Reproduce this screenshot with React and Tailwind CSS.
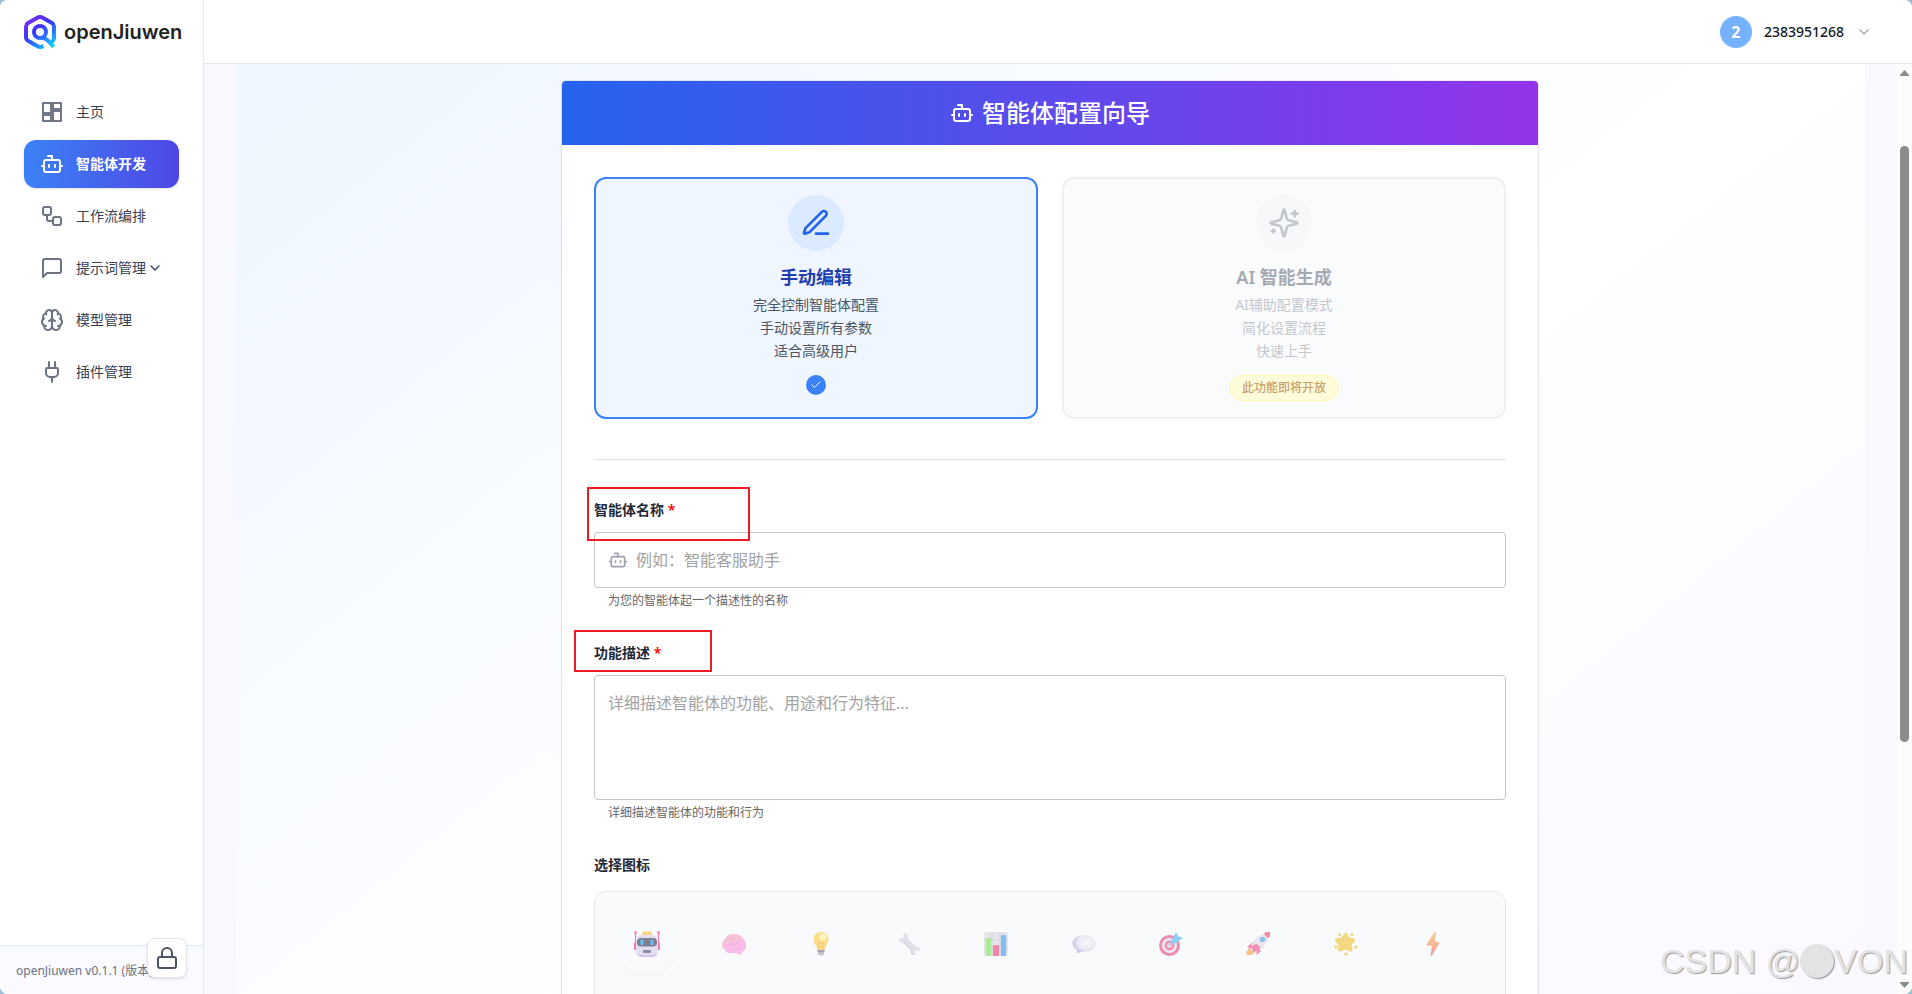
import { useState } from "react";
import { Bot, Brain, Check, ChevronDown, Lock, Plug, Workflow } from "lucide-react";

const DashboardIcon = ({ className }) => (
  <svg className={className} viewBox="0 0 24 24" fill="none" stroke="currentColor" strokeWidth="1.9">
    <rect x="3" y="3" width="8" height="10" />
    <rect x="13" y="3" width="8" height="6" />
    <rect x="13" y="11" width="8" height="10" />
    <rect x="3" y="15" width="8" height="6" />
  </svg>
);

const MessageIcon = ({ className }) => (
  <svg className={className} viewBox="0 0 24 24" fill="none" stroke="currentColor" strokeWidth="2" strokeLinecap="round" strokeLinejoin="round">
    <path d="M21 15a2 2 0 0 1-2 2H7l-4 4V5a2 2 0 0 1 2-2h14a2 2 0 0 1 2 2z" />
  </svg>
);

const PenIcon = ({ className }) => (
  <svg className={className} viewBox="0 0 24 24" fill="none" stroke="currentColor" strokeWidth="2" strokeLinecap="round" strokeLinejoin="round">
    <path d="M12 20h9" />
    <path d="M16.376 3.622a1 1 0 0 1 3.002 3.002L7.368 18.635a2 2 0 0 1-.855.506l-2.872.838a.5.5 0 0 1-.62-.62l.838-2.872a2 2 0 0 1 .506-.854z" />
  </svg>
);

const SparklesIcon = ({ className }) => (
  <svg className={className} viewBox="0 0 24 24" fill="none" stroke="currentColor" strokeWidth="2" strokeLinecap="round" strokeLinejoin="round">
    <path d="M9.937 15.5A2 2 0 0 0 8.5 14.063l-6.135-1.582a.5.5 0 0 1 0-.962L8.5 9.936A2 2 0 0 0 9.937 8.5l1.582-6.135a.5.5 0 0 1 .963 0L14.063 8.5A2 2 0 0 0 15.5 9.937l6.135 1.581a.5.5 0 0 1 0 .964L15.5 14.063a2 2 0 0 0-1.437 1.437l-1.582 6.135a.5.5 0 0 1-.963 0z" />
    <path d="M20 3v4" />
    <path d="M22 5h-4" />
    <path d="M4 17v2" />
    <path d="M5 18H3" />
  </svg>
);

const Logo = () => (
  <svg className="h-[34px] w-8 shrink-0" viewBox="0 0 32 34" fill="none">
    <defs>
      <linearGradient id="logo-ring" x1="6" y1="2" x2="28" y2="32" gradientUnits="userSpaceOnUse">
        <stop offset="0" stopColor="#7a2cf8" />
        <stop offset="0.4" stopColor="#3b35fb" />
        <stop offset="0.75" stopColor="#1f8dff" />
        <stop offset="1" stopColor="#10dcff" />
      </linearGradient>
    </defs>
    <g stroke="url(#logo-ring)" strokeWidth="4" strokeLinejoin="round">
      <path d="M19.5 31.2 Q16 32.6 13.5 31.2 L4 25.8 Q2 24.6 2 22.4 V11.4 Q2 9.2 4 8 L13.8 2.6 Q16 1.4 18.2 2.6 L28 8 Q30 9.2 30 11.4 V24 L27 28.5" />
      <circle cx="16" cy="17" r="6" />
      <path d="M18 22.5 Q24 24 29.5 32" />
    </g>
  </svg>
);

const RobotEmoji = () => (
  <svg className="size-[26px] opacity-75" viewBox="0 0 26 26">
    <path d="M1.5 2v17M24.5 2v17" stroke="#f0568a" strokeWidth="1.2" />
    <circle cx="1.5" cy="1.6" r="1.4" fill="#f0568a" />
    <circle cx="24.5" cy="1.6" r="1.4" fill="#f0568a" />
    <rect x="0" y="11" width="3" height="8" rx="1.5" fill="#f0568a" />
    <rect x="23" y="11" width="3" height="8" rx="1.5" fill="#f0568a" />
    <rect x="8" y="0.5" width="10" height="6" rx="2" fill="#f7c55c" />
    <path d="M2 10q0-6 6-6h10q6 0 6 6v11q0 5-5 5H7q-5 0-5-5z" fill="#ddd6ec" />
    <rect x="3" y="7" width="20" height="8.5" rx="4" fill="#56556c" />
    <rect x="6.5" y="8.5" width="3" height="5.5" rx="1" fill="#35b1f3" />
    <rect x="16.5" y="8.5" width="3" height="5.5" rx="1" fill="#35b1f3" />
    <rect x="9" y="19" width="8" height="3" rx="1" fill="#6d6680" />
    <path d="M4 23q9 3 18 0-1 3-4 3H8q-3 0-4-3z" fill="#c3abe8" />
  </svg>
);

const BrainEmoji = () => (
  <svg className="size-6 opacity-50" viewBox="0 0 24 24">
    <path d="M0 13Q0 9 3 7q2-5 9-5 6 0 9 4 4 5 3 9-1 4-4 5l-1 3-4-2H8q-5 0-5-4-3 0-3-4z" fill="#f58bb6" />
    <path d="M3 16q1-5 6-5 4-1 6-4 7 1 8 7-1 5-4 6l-1 3-4-2H8q-5 0-5-5z" fill="#fb7fe0" />
    <path d="M3 9q4-4 8-3M5 15q3-4 8-3 4 0 5-4M12 18q4 0 5-3" stroke="#e4609f" strokeWidth="0.8" fill="none" />
  </svg>
);

const BulbEmoji = () => (
  <svg className="size-6 opacity-60" viewBox="0 0 24 24">
    <path d="M12 0c5 0 7.5 3.5 7.5 7.5S16 14 15.5 18h-7C8 14 4.5 12 4.5 7.5S7 0 12 0z" fill="#fdc93b" />
    <circle cx="14" cy="5" r="3.5" fill="#fff0a0" />
    <path d="M10.5 18l-1-7q2 1 5 0l-1 7" stroke="#ee9c2f" fill="none" />
    <path d="M8.5 18h7v2h-7z" fill="#76657d" />
    <path d="M9 20h6v2.5l-2 1h-2l-2-1z" fill="#a89ab0" />
  </svg>
);

const WrenchEmoji = () => (
  <svg className="size-6 opacity-50" viewBox="0 0 24 24">
    <path d="M2 6l3 1 2-2-1-3q5-2 5 5l8 8q5-1 4 4l-3-1-2 2 1 3q-5 1-5-5L6 10q-4 1-4-4z" fill="#cfc7dc" />
    <path d="M6 10l8 8q0 4 2 5" stroke="#a094b8" strokeWidth="1" fill="none" />
  </svg>
);

const ChartEmoji = () => (
  <svg className="size-6 opacity-60" viewBox="0 0 24 24">
    <rect width="24" height="24" rx="2" fill="#d9d6df" />
    <path d="M0 8h24M0 16h24M8 0v24M16 0v24" stroke="#b6b1c0" strokeWidth="0.8" />
    <rect x="2" y="6" width="5" height="18" rx="1" fill="#7be05a" />
    <rect x="9" y="13" width="6" height="11" rx="1" fill="#ec3b71" />
    <rect x="17" y="3" width="5" height="21" rx="1" fill="#2f97ec" />
  </svg>
);

const BubbleEmoji = () => (
  <svg className="size-6 opacity-60" viewBox="0 0 24 24">
    <defs>
      <radialGradient id="bubble-fill" cx="0.6" cy="0.4" r="0.6">
        <stop offset="0" stopColor="#fbf9fd" />
        <stop offset="0.6" stopColor="#e6dff0" />
        <stop offset="1" stopColor="#b3a1d2" />
      </radialGradient>
    </defs>
    <path d="M12 3c7 0 11.5 4 11.5 8.5S19 19.5 12 19.5l-3 .5-4 1.5V18C2 16.5.5 14 .5 11.5.5 7 5 3 12 3z" fill="url(#bubble-fill)" />
  </svg>
);

const TargetEmoji = () => (
  <svg className="size-6 opacity-60" viewBox="0 0 24 24">
    <circle cx="10.5" cy="13.5" r="10.5" fill="#e9477b" />
    <circle cx="10.5" cy="13.5" r="7.5" fill="#e8dff2" />
    <circle cx="10.5" cy="13.5" r="5" fill="#e9477b" />
    <circle cx="10.5" cy="13.5" r="2.5" fill="#d4c4de" />
    <path d="M10.5 13.5l5-5" stroke="#8b6da0" strokeWidth="1" />
    <path d="M11 10l3-4 3-6 2 4 5 2-6 4-4 3z" fill="#45b2ee" />
  </svg>
);

const RocketEmoji = () => (
  <svg className="size-6 opacity-60" viewBox="0 0 24 24">
    <path d="M1 23q-2-4 3-7l5 4q-3 4-8 3z" fill="#fb9b3c" />
    <path d="M7 10l-6 5 5 1zM13 17l-2 6 4-4z" fill="#ef3f72" />
    <path d="M4 17Q7 5 19 1l4 4q-3 11-14 16z" fill="#e2dae9" />
    <path d="M18 1q3-1.5 6-1 .5 3-1 6-4-1-5-5z" fill="#ef4163" />
    <circle cx="16.5" cy="7.5" r="2.7" fill="#4a97e0" />
    <path d="M11 12q-6 1-9 5l4-1 1 4 4-1-1 4q4-4 4-8z" fill="#f14a85" />
  </svg>
);

const StarEmoji = () => (
  <svg className="size-6 opacity-60" viewBox="0 0 24 24">
    <path d="M11.5 1q1 0 1.5 1.5L15 6l4 .5q3 .5 1 3L17 13l1 4q.5 3-2 2l-4.500-2L7 19q-3 1-2.500-2L5 13 2 9.500q-2-2 1-3L8 6l2-3.500Q10.500 1 11.500 1z" fill="#edc330" stroke="#edc330" strokeLinejoin="round" />
    <g fill="#f0bf34">
      <circle cx="5.5" cy="2.5" r="1.5" />
      <circle cx="18" cy="2.5" r="1.5" />
      <circle cx="2" cy="15" r="1.7" />
      <circle cx="22" cy="15" r="1.7" />
      <circle cx="12" cy="22" r="1.8" />
    </g>
  </svg>
);

const BoltEmoji = () => (
  <svg className="size-6 opacity-60" viewBox="0 0 24 24">
    <defs>
      <linearGradient id="bolt-fill" x1="0" y1="0" x2="0" y2="1">
        <stop offset="0" stopColor="#fdb24c" />
        <stop offset="1" stopColor="#f4605c" />
      </linearGradient>
    </defs>
    <path d="M13.5 0L5.5 12.500l.5 1H11L9.500 24l1.500-.5 7.500-12.500-.5-1h-4L15 0z" fill="url(#bolt-fill)" />
  </svg>
);

const navItems = [
  { id: "home", label: "主页", icon: DashboardIcon },
  { id: "agent", label: "智能体开发", icon: Bot },
  { id: "workflow", label: "工作流编排", icon: Workflow },
  { id: "prompt", label: "提示词管理", icon: MessageIcon, expandable: true },
  { id: "model", label: "模型管理", icon: Brain },
  { id: "plugin", label: "插件管理", icon: Plug },
];

const agentIcons = [
  { id: "robot", label: "机器人", icon: RobotEmoji },
  { id: "brain", label: "大脑", icon: BrainEmoji },
  { id: "bulb", label: "灯泡", icon: BulbEmoji },
  { id: "wrench", label: "扳手", icon: WrenchEmoji },
  { id: "chart", label: "图表", icon: ChartEmoji },
  { id: "bubble", label: "对话", icon: BubbleEmoji },
  { id: "target", label: "目标", icon: TargetEmoji },
  { id: "rocket", label: "火箭", icon: RocketEmoji },
  { id: "star", label: "星星", icon: StarEmoji },
  { id: "bolt", label: "闪电", icon: BoltEmoji },
];

const Sidebar = () => (
  <aside className="flex w-[204px] shrink-0 flex-col border-r border-gray-200 bg-white">
    <div className="flex h-16 items-center gap-2 px-6">
      <Logo />
      <span className="font-['Inter',sans-serif] text-xl font-semibold text-[#222222]">openJiuwen</span>
    </div>

    <nav className="flex flex-1 flex-col gap-1 p-6">
      {navItems.map((item) => {
        const Icon = item.icon;
        const active = item.id === "agent";
        return (
          <a
            key={item.id}
            href={`#${item.id}`}
            className={
              active
                ? "flex h-12 items-center rounded-xl bg-linear-to-r/srgb from-[#3b82f6] to-[#4f46e5] px-4 text-sm font-bold text-white shadow-sm"
                : "flex h-12 items-center rounded-xl px-4 text-sm text-[#374151]"
            }
          >
            <Icon className={active ? "mr-3 size-6 shrink-0" : "mr-3 size-6 shrink-0 text-[#6b7280]"} />
            <span className="whitespace-nowrap">{item.label}</span>
            {item.expandable && <ChevronDown className="ml-auto size-4 shrink-0" />}
          </a>
        );
      })}
    </nav>

    <div className="relative border-t border-[#dbeafe] bg-[#f9fbff] pt-[17px] pr-4 pb-[15px] pl-4">
      <p className="overflow-hidden text-xs whitespace-nowrap text-[#6b7280]">openJiuwen v0.1.1 (版本)</p>
      <button type="button" aria-label="锁定侧边栏" className="absolute right-4 bottom-4 flex size-10 items-center justify-center rounded-lg border border-gray-200 bg-white text-[#4b5563] shadow-sm">
        <Lock className="size-6" />
      </button>
    </div>
  </aside>
);

const Header = () => (
  <header className="flex h-16 shrink-0 items-center justify-end border-b border-gray-200 bg-white px-10">
    <button type="button" className="flex items-center gap-3">
      <span className="flex size-8 items-center justify-center rounded-full bg-[#74b1ff] text-base font-bold text-white">2</span>
      <span className="text-sm font-medium text-[#111827]">2383951268</span>
      <ChevronDown className="size-4 text-[#9ca3af]" />
    </button>
  </header>
);

const ModeCards = () => (
  <div className="grid grid-cols-2 gap-6">
    <button type="button" aria-pressed="true" className="flex flex-col items-center rounded-xl border-2 border-[#3b82f6] bg-[#eff6ff] p-4">
      <span className="flex size-14 items-center justify-center rounded-full bg-[#dbeafe] text-[#2563eb]">
        <PenIcon className="size-8" />
      </span>
      <span className="mt-3 mb-0.5 text-lg leading-7 font-semibold text-[#1e40af]">手动编辑</span>
      <span className="text-sm leading-[23px] text-[#4b5563]">
        完全控制智能体配置
        <br />
        手动设置所有参数
        <br />
        适合高级用户
      </span>
      <span className="mt-[13px] flex size-5 items-center justify-center rounded-full bg-[#3b82f6] text-white">
        <Check className="size-3" />
      </span>
    </button>

    <button type="button" disabled className="flex flex-col items-center rounded-xl border-2 border-[#e5e7eb] bg-[#f8fafc] p-4 opacity-60">
      <span className="flex size-14 items-center justify-center rounded-full bg-[#f3f4f6] text-[#9ca3af]">
        <SparklesIcon className="size-8" />
      </span>
      <span className="mt-3 mb-0.5 text-lg leading-7 font-semibold text-[#6b7280]">AI 智能生成</span>
      <span className="text-sm leading-[23px] text-[#9ca3af]">
        AI辅助配置模式
        <br />
        简化设置流程
        <br />
        快速上手
      </span>
      <span className="mt-[13px] flex h-[26px] items-center rounded-full border border-[#fef08a] bg-[#fef9c3] px-3 text-xs font-medium text-[#a16207]">此功能即将开放</span>
    </button>
  </div>
);

const Scrollbar = () => (
  <div className="flex w-[15px] shrink-0 flex-col items-center bg-[#fcfcfc]" aria-hidden="true">
    <svg className="h-4 w-[9px] shrink-0" viewBox="0 0 9 16" fill="#8b8b8b">
      <path d="M4.5 6L9 11v1H0v-1z" />
    </svg>
    <div className="flex-[66]" />
    <div className="w-[9px] flex-[596] rounded-full bg-[#8b8b8b]" />
    <div className="flex-[236]" />
    <svg className="h-4 w-[9px] shrink-0" viewBox="0 0 9 16" fill="#8b8b8b">
      <path d="M4.5 10L9 5V4H0v1z" />
    </svg>
  </div>
);

const App = () => {
  const [name, setName] = useState("");
  const [description, setDescription] = useState("");
  const [selectedIcon, setSelectedIcon] = useState("robot");

  return (
    <div className="h-screen bg-[#9cc0d2] font-['Noto_Sans','Noto_Sans_CJK_SC',sans-serif]">
      <div className="relative flex h-full overflow-hidden rounded-lg bg-white">
        <Sidebar />

        <div className="flex min-w-0 flex-1 flex-col">
          <Header />

          <div className="flex min-h-0 flex-1">
            <main className="min-w-0 flex-1 overflow-hidden bg-[#f7f9fd] px-8">
              <div className="h-full overflow-hidden bg-[linear-gradient(141deg,#eff6ff_0%,#ffffff_56%,#faf5ff_115%)] pt-[17px] pr-[25px] pl-6">
                <div className="mx-auto max-w-[976px] rounded bg-white shadow-[0_0_0_1px_rgba(0,0,0,0.06),0_1px_3px_rgba(0,0,0,0.1)]">
                  <h1 className="flex h-16 items-center justify-center gap-2 rounded-t bg-linear-to-r/srgb from-[#2563eb] to-[#9333ea] text-2xl font-medium text-white">
                    <Bot className="size-6" />
                    智能体配置向导
                  </h1>

                  <form className="p-8" onSubmit={(e) => e.preventDefault()}>
                    <ModeCards />

                    <hr className="my-10 border-[#e0e0e0]" />

                    <div className="relative mb-3 text-sm font-semibold text-[#1f2937]">
                      <label htmlFor="agentName">
                        智能体名称 <span className="text-[#ff0000]">*</span>
                      </label>
                      <div className="pointer-events-none absolute -top-[13px] -left-[7px] h-[54px] w-[163px] border-2 border-[#ed1c24]" />
                    </div>
                    <div className="flex h-14 items-center gap-2 rounded border border-[#c4c4c4] px-[13px]">
                      <Bot className="size-5 shrink-0 text-[#9ca3af]" />
                      <input id="agentName" type="text" className="min-w-0 flex-1 text-base text-[#1f2937] outline-none placeholder:text-[#a2a2a2]" placeholder="例如：智能客服助手" value={name} onChange={(e) => setName(e.target.value)} />
                    </div>
                    <p className="mx-[14px] mt-[3px] text-xs leading-5 text-[#666666]">为您的智能体起一个描述性的名称</p>

                    <div className="relative mt-8 mb-3 text-sm font-semibold text-[#1f2937]">
                      <label htmlFor="agentDescription">
                        功能描述 <span className="text-[#ff0000]">*</span>
                      </label>
                      <div className="pointer-events-none absolute -top-[13px] -left-5 h-[42px] w-[138px] border-2 border-[#ed1c24]" />
                    </div>
                    <textarea
                      id="agentDescription"
                      className="block h-[125px] w-full resize-none rounded border border-[#c4c4c4] px-[13px] py-4 text-base leading-[23px] text-[#1f2937] outline-none placeholder:text-[#a2a2a2]"
                      placeholder="详细描述智能体的功能、用途和行为特征..."
                      value={description}
                      onChange={(e) => setDescription(e.target.value)}
                    />
                    <p className="mx-[14px] mt-[3px] text-xs leading-5 text-[#666666]">详细描述智能体的功能和行为</p>

                    <h2 className="mt-8 mb-4 text-sm font-semibold text-[#1f2937]">选择图标</h2>
                    <div className="grid grid-cols-10 justify-items-center rounded-xl border border-gray-200 bg-[#f8fafc] pt-[21px] pr-7 pb-24 pl-2">
                      {agentIcons.map((item) => {
                        const Icon = item.icon;
                        const selected = item.id === selectedIcon;
                        return (
                          <button
                            key={item.id}
                            type="button"
                            aria-label={item.label}
                            aria-pressed={selected}
                            onClick={() => setSelectedIcon(item.id)}
                            className={
                              selected
                                ? "flex size-[62px] items-center justify-center rounded-full bg-[#f9fafc] shadow-[0_1px_2px_rgba(0,0,0,0.04)]"
                                : "flex size-[62px] items-center justify-center rounded-full"
                            }
                          >
                            <Icon />
                          </button>
                        );
                      })}
                    </div>
                  </form>
                </div>
              </div>
            </main>
            <Scrollbar />
          </div>
        </div>

        <div className="pointer-events-none absolute right-1 bottom-2 flex items-center font-['Liberation_Sans',sans-serif] text-[34px] leading-[50px] whitespace-nowrap text-[#e3e3e3] [text-shadow:1px_1px_1px_#9a9a9a]">
          CSDN @
          <span className="size-[34px] rounded-full bg-[#e3e3e3] shadow-[1px_1px_1px_#9a9a9a]" />
          VON
        </div>
      </div>
    </div>
  );
};

export default App;
